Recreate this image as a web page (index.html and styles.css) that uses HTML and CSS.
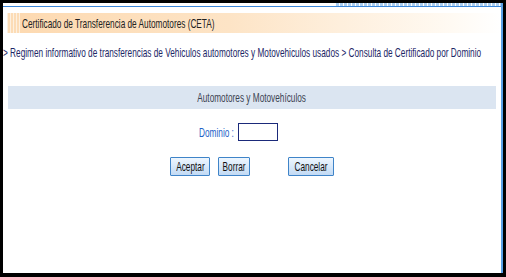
FILE: index.html
```html
<!DOCTYPE html>
<html lang="es">
<head>
  <meta charset="UTF-8" />
  <title>Certificado de Transferencia de Automotores (CETA)</title>
  <link rel="stylesheet" href="styles.css">
</head>
<body>
  <div class="frame">
    <div class="top-dots"></div>
    <div class="top-line"></div>

    <div class="title-bar">
      <span class="stripes"></span>
      <span class="narrow title">Certificado de Transferencia de Automotores (CETA)</span>
    </div>

    <p class="breadcrumb"><span class="narrow">&gt; Regimen informativo de transferencias de Vehiculos automotores y Motovehiculos usados &gt; Consulta de Certificado por Dominio</span></p>

    <div class="section-head"><span class="narrow mid">Automotores y Motovehículos</span></div>

    <div class="field-row">
      <label for="dominio"><span class="narrow end">Dominio :</span></label>
      <input type="text" id="dominio">
    </div>

    <div class="button-row">
      <button class="btn-aceptar"><span class="narrow mid">Aceptar</span></button>
      <button class="btn-borrar"><span class="narrow mid">Borrar</span></button>
      <button class="btn-cancelar"><span class="narrow mid">Cancelar</span></button>
    </div>
  </div>
</body>
</html>
```

FILE: styles.css
```css
html, body {
  margin: 0;
  padding: 0;
  background: #000;
  height: 277px;
  overflow: hidden;
}
body {
  font-family: "Liberation Sans", Arial, sans-serif;
  font-size: 13px;
}
/* the old page renders its Arial squeezed, so the text is narrowed */
.narrow {
  display: inline-block;
  white-space: nowrap;
  transform: scaleX(0.635);
  transform-origin: left center;
}
.narrow.mid {
  transform-origin: center center;
}
.narrow.end {
  transform-origin: right center;
}
.frame {
  margin: 3px 3px 0 3px;
  height: 270px;
  background: #fff;
  border-right: 2px solid #5aa0e6;
  box-sizing: border-box;
  overflow: hidden;
}
.top-dots {
  height: 3px;
  margin-left: 333px;
  background: repeating-linear-gradient(90deg, #a9cdf0 0 3px, #fff 3px 4px);
}
.top-line {
  height: 1px;
  background: #3a86d8;
}
.title-bar {
  display: flex;
  align-items: center;
  height: 20px;
  margin: 6px 0 0 4px;
  background: linear-gradient(90deg, #fdd9b0 0%, #fde4c6 45%, #fffaf3 90%, #fff 100%);
}
.stripes {
  width: 13px;
  height: 100%;
  background: repeating-linear-gradient(90deg, #fdf0e0 0 1px, #fcdcb6 1px 3px);
}
.title {
  margin-left: 2px;
  color: #222;
}
.breadcrumb {
  margin: 12px 0 0 0;
  line-height: 15px;
  color: #1c2766;
  white-space: nowrap;
  overflow: hidden;
}
.section-head {
  margin: 26px 5px 0 5px;
  height: 23px;
  line-height: 23px;
  background: #dbe5f1;
  color: #3d4452;
  text-align: center;
}
.field-row {
  display: flex;
  justify-content: center;
  align-items: center;
  gap: 4px;
  margin: 14px 0 0 0;
  padding-right: 28px;
}
.field-row label {
  display: flex;
  justify-content: flex-end;
  width: 36px;
  color: #1e62c8;
}
.field-row input {
  width: 40px;
  height: 18px;
  box-sizing: border-box;
  border: 1px solid #1b2a7a;
  padding: 0 2px;
  font: inherit;
}
.button-row {
  display: flex;
  justify-content: center;
  gap: 8px;
  margin: 16px 0 0 0;
}
.button-row button {
  display: flex;
  justify-content: center;
  align-items: center;
  height: 19px;
  padding: 0;
  font: inherit;
  color: #111;
  background: linear-gradient(#eef6fe, #c2daf4);
  border: 1px solid #3f84c8;
  border-radius: 1px;
}
.btn-aceptar { width: 40px; }
.btn-borrar { width: 32px; }
.btn-cancelar {
  width: 46px;
  margin-left: 30px;
}
```
